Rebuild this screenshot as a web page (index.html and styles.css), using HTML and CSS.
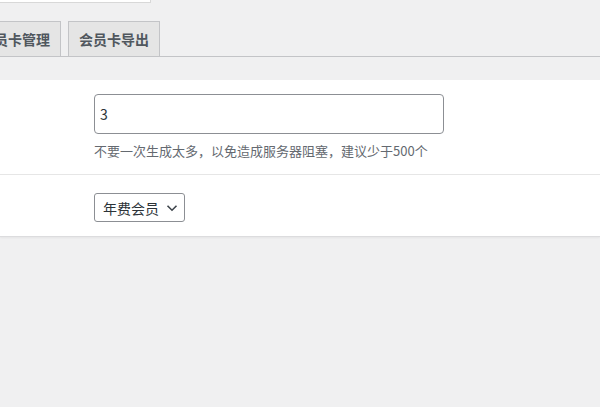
FILE: index.html
```html
<!DOCTYPE html>
<html lang="zh-CN">
<head>
<meta charset="utf-8">
<title>会员卡</title>
<link rel="stylesheet" href="styles.css">
</head>
<body>
<div class="topbox"></div>
<nav class="tabs">
  <a class="tab">会员卡管理</a>
  <a class="tab">会员卡导出</a>
</nav>
<div class="panel">
  <div class="row row-first">
    <input class="field" type="text" value="3">
    <p class="desc">不要一次生成太多，以免造成服务器阻塞，建议少于500个</p>
  </div>
  <div class="row row-second">
    <div class="select">
      <span>年费会员</span>
      <svg class="chev" width="12" height="8" viewBox="0 0 12 8"><path d="M1.5 1.8 L6 6.2 L10.5 1.8" fill="none" stroke="#3c434a" stroke-width="1.6"/></svg>
    </div>
  </div>
</div>
</body>
</html>
```
FILE: styles.css
```css
html, body {
  margin: 0;
  padding: 0;
}
body {
  background: #f0f0f1;
  font-family: "Noto Sans CJK SC", "Noto Sans", sans-serif;
  font-size: 14px;
  color: #3c434a;
  overflow: hidden;
  width: 600px;
  height: 407px;
}
.topbox {
  width: 150px;
  height: 2px;
  background: #fff;
  border-bottom: 1px solid #d8d8d8;
  border-right: 1px solid #d8d8d8;
}
.tabs {
  margin-top: 18px;
  margin-left: -31px;
  border-bottom: 1px solid #c3c4c7;
  display: flex;
  gap: 7px;
  height: 35px;
}
.tab {
  box-sizing: border-box;
  height: 35px;
  padding: 5px 10px;
  border: 1px solid #c3c4c7;
  border-bottom: none;
  background: #e5e5e5;
  color: #50575e;
  font-weight: 700;
  font-size: 14px;
  line-height: 24px;
  white-space: nowrap;
}
.panel {
  margin-top: 23px;
  background: #fff;
  border-bottom: 1px solid #dcdcde;
  box-shadow: 0 1px 2px rgba(0,0,0,0.05);
}
.row {
  padding-left: 94px;
}
.row-first {
  padding-top: 14px;
  padding-bottom: 13px;
  border-bottom: 1px solid #e6e6e6;
}
.row-second {
  padding-top: 18px;
  padding-bottom: 14px;
}
.field {
  box-sizing: border-box;
  display: block;
  width: 350px;
  height: 40px;
  margin: 0;
  padding: 0 5px;
  border: 1px solid #8c8f94;
  border-radius: 4px;
  font-family: "Noto Sans CJK SC", "Noto Sans", sans-serif;
  font-size: 14px;
  color: #2c3338;
  background: #fff;
}
.desc {
  margin: 7px 0 0;
  font-size: 13px;
  line-height: 20px;
  color: #646970;
}
.select {
  box-sizing: border-box;
  width: 91px;
  height: 29px;
  border: 1px solid #8c8f94;
  border-radius: 3px;
  display: flex;
  align-items: center;
  padding-left: 8px;
  gap: 7px;
  color: #2c3338;
  font-size: 14px;
}
.chev {
  display: block;
}
```
